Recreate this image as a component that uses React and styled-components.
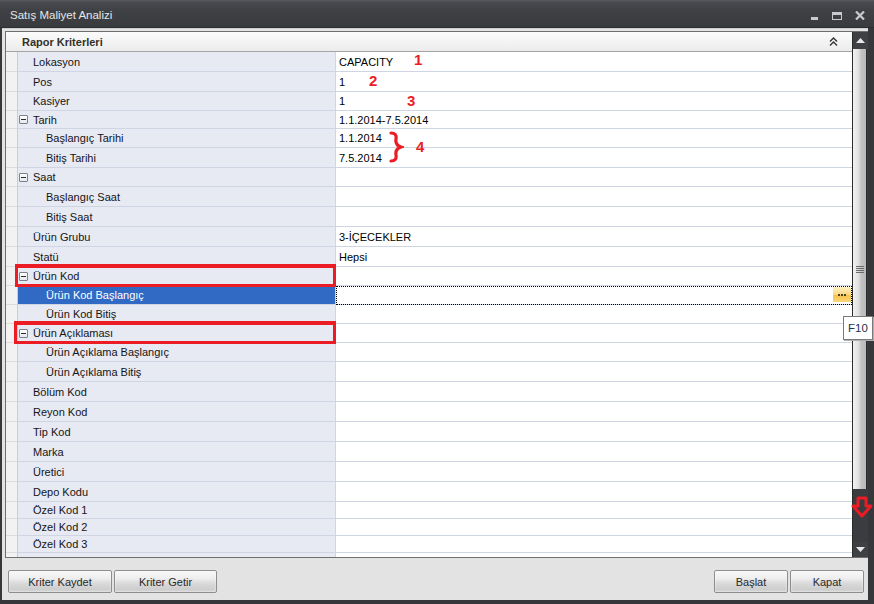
import React from "react";
import styled, { createGlobalStyle } from "styled-components";

const GlobalStyle = createGlobalStyle`
  html, body {
    margin: 0;
    padding: 0;
    background: #36373b;
  }
  body {
    font-family: "Liberation Sans", Arial, sans-serif;
    font-size: 11px;
  }
`;

const Window = styled.div`
  position: relative;
  width: 874px;
  height: 604px;
  display: flex;
  flex-direction: column;
  background: #36373b;
  overflow: hidden;
`;

const TitleBar = styled.div`
  height: 28px;
  flex: 0 0 28px;
  box-sizing: border-box;
  display: flex;
  align-items: center;
  padding: 0 10px;
  background: linear-gradient(#5a5b60 0, #4a4b50 2px, #404145 10px, #3a3b3f 100%);
  border-bottom: 1px solid #2c2d30;
`;

const Title = styled.div`
  flex: 1;
  color: #e4e6e8;
  font-size: 11.5px;
  padding-top: 2px;
`;

const Controls = styled.div`
  display: flex;
  align-items: center;
  gap: 13px;
  margin-right: -1px;
  padding-top: 4px;
`;

const Frame = styled.div`
  flex: 1;
  display: flex;
  padding: 0 6px 4px 2px;
  min-height: 0;
`;

const Body = styled.div`
  flex: 1;
  display: flex;
  flex-direction: column;
  background: #e3e3e3;
  padding: 2px 0 0 3px;
  border-top: 1px solid #cfcfcf;
`;

const GridArea = styled.div`
  height: 527px;
  display: flex;
  border: 1px solid #6f6f6f;
  border-right: none;
  box-sizing: border-box;
`;

const PropertyList = styled.div`
  flex: 1;
  display: flex;
  flex-direction: column;
  overflow: hidden;
  background: #fff;
`;

const CategoryHeader = styled.div`
  height: 20px;
  flex: 0 0 20px;
  box-sizing: border-box;
  display: flex;
  align-items: center;
  padding: 0 14px 0 16px;
  background: linear-gradient(#fbfbfb, #ececec);
  border-bottom: 1px solid #a4a4a4;
  font-weight: bold;
  color: #33302a;
`;

const HeaderText = styled.div`
  flex: 1;
`;

const Row = styled.div`
  display: grid;
  grid-template-columns: 12px 318px 1fr;
  height: ${(p) => p.$h}px;
  flex: 0 0 ${(p) => p.$h}px;
`;

const Gutter = styled.div`
  background: #f2f2f2;
  border-bottom: 1px solid #dcdcdc;
  border-right: 1px solid #c9ccd6;
`;

const Label = styled.div`
  display: flex;
  align-items: center;
  gap: 4px;
  padding-left: ${(p) => (p.$child ? 28 : p.$group ? 1 : 15)}px;
  background: ${(p) => (p.$selected ? "#316ac5" : "#e7e9f3")};
  color: ${(p) => (p.$selected ? "#fff" : "#151515")};
  border-bottom: 1px solid #cfd5e2;
  border-right: 1px solid #cfd5e2;
  white-space: nowrap;
  overflow: hidden;
`;

const Value = styled.div`
  position: relative;
  display: flex;
  align-items: center;
  padding-left: 3px;
  background: #fff;
  color: #000;
  border-bottom: 1px solid #cfd5e2;
  outline: ${(p) => (p.$focused ? "1px dotted #000" : "none")};
  outline-offset: -1px;
`;

const EllipsisButton = styled.div`
  position: absolute;
  right: 1px;
  top: 1px;
  bottom: 2px;
  width: 18px;
  display: flex;
  align-items: center;
  justify-content: center;
  gap: 1px;
  background: linear-gradient(#fff0c4, #fcd982 50%, #f7c24b 55%, #fbd77a);
  span {
    width: 2px;
    height: 2px;
    background: #4a3e22;
  }
`;

const ExpandBox = styled.span`
  position: relative;
  width: 7px;
  height: 7px;
  border: 1px solid #7b828e;
  border-radius: 1px;
  background: linear-gradient(#fff, #e6e8ee);
  margin-right: 1px;
  &::after {
    content: "";
    position: absolute;
    left: 1px;
    right: 1px;
    top: 3px;
    height: 1px;
    background: #2d2d2d;
  }
`;

const ScrollBar = styled.div`
  width: 16px;
  flex: 0 0 16px;
  display: flex;
  flex-direction: column;
  background: #3b3c3f;
  border-left: 1px solid #2a2a2a;
  box-sizing: border-box;
`;

const ScrollButton = styled.div`
  height: ${(p) => p.$h}px;
  flex: 0 0 ${(p) => p.$h}px;
  display: flex;
  align-items: center;
  justify-content: center;
  background: #3f4044;
`;

const Thumb = styled.div`
  height: 440px;
  flex: 0 0 440px;
  display: flex;
  align-items: center;
  justify-content: center;
  margin: 0 1px 0 0;
  background: linear-gradient(to right, #f3f3f3, #dedede 45%, #c4c4c4 60%, #b9b9b9);
  border-right: 1px solid #2a2a2a;
`;

const Grip = styled.div`
  width: 8px;
  display: flex;
  flex-direction: column;
  gap: 1px;
  span {
    height: 1px;
    background: #6b6b6b;
  }
`;

const Track = styled.div`
  flex: 1;
  background: #3b3c3f;
`;

const Footer = styled.div`
  flex: 1;
  display: flex;
  justify-content: space-between;
  padding: 12px 4px 0 3px;
`;

const ButtonGroup = styled.div`
  display: flex;
  gap: 2px;
  align-items: flex-start;
`;

const Button = styled.button`
  width: ${(p) => p.$w}px;
  height: 23px;
  box-sizing: border-box;
  border: 1px solid #8e8e8e;
  border-radius: 2px;
  background: linear-gradient(#f8f8f8 0%, #eeeeee 35%, #d9d9d9 60%, #cdcdcd 90%, #d8d8d8 100%);
  box-shadow: inset 0 0 2px rgba(255, 255, 255, 0.9);
  font-family: "Liberation Sans", Arial, sans-serif;
  font-size: 11px;
  color: #2a2a2a;
  padding: 0;
`;

const Tooltip = styled.div`
  position: absolute;
  left: 843px;
  top: 316px;
  width: 30px;
  height: 24px;
  box-sizing: border-box;
  background: #fff;
  border: 1px solid #7a7a7a;
  box-shadow: 1px 1px 0 #b0b0b0;
  color: #23324f;
  font-size: 11.5px;
  display: flex;
  align-items: center;
  justify-content: center;
`;

const Mark = styled.div`
  position: absolute;
  left: ${(p) => p.$x}px;
  top: ${(p) => p.$y}px;
  color: #ec1c24;
  font-weight: bold;
  font-size: 15px;
  line-height: 15px;
`;

const Highlight = styled.div`
  position: absolute;
  left: ${(p) => p.$x}px;
  top: ${(p) => p.$y}px;
  width: ${(p) => p.$w}px;
  height: ${(p) => p.$h}px;
  box-sizing: border-box;
  border: 3px solid #ec1c24;
  border-top-width: 4px;
`;

const Overlay = styled.svg`
  position: absolute;
  left: ${(p) => p.$x}px;
  top: ${(p) => p.$y}px;
`;

const rows = [
  { label: "Lokasyon", value: "CAPACITY", h: 20 },
  { label: "Pos", value: "1", h: 20 },
  { label: "Kasiyer", value: "1", h: 19 },
  { label: "Tarih", value: "1.1.2014-7.5.2014", h: 18, group: true },
  { label: "Başlangıç Tarihi", value: "1.1.2014", h: 19, child: true },
  { label: "Bitiş Tarihi", value: "7.5.2014", h: 20, child: true },
  { label: "Saat", h: 19, group: true },
  { label: "Başlangıç Saat", h: 20, child: true },
  { label: "Bitiş Saat", h: 20, child: true },
  { label: "Ürün Grubu", value: "3-İÇECEKLER", h: 20 },
  { label: "Statü", value: "Hepsi", h: 20 },
  { label: "Ürün Kod", h: 19, group: true },
  { label: "Ürün Kod Başlangıç", h: 19, child: true, selected: true },
  { label: "Ürün Kod Bitiş", h: 19, child: true },
  { label: "Ürün Açıklaması", h: 19, group: true },
  { label: "Ürün Açıklama Başlangıç", h: 19, child: true },
  { label: "Ürün Açıklama Bitiş", h: 20, child: true },
  { label: "Bölüm Kod", h: 20 },
  { label: "Reyon Kod", h: 20 },
  { label: "Tip Kod", h: 20 },
  { label: "Marka", h: 20 },
  { label: "Üretici", h: 20 },
  { label: "Depo Kodu", h: 20 },
  { label: "Özel Kod 1", h: 17 },
  { label: "Özel Kod 2", h: 17 },
  { label: "Özel Kod 3", h: 17 },
  { label: "", h: 12 },
];

const Minimize = () => (
  <svg width="8" height="8" viewBox="0 0 8 8">
    <rect x="0" y="5" width="7" height="3" fill="#c7cbd0" />
  </svg>
);

const Maximize = () => (
  <svg width="10" height="8" viewBox="0 0 10 8">
    <rect x="0.5" y="0.5" width="9" height="7" fill="none" stroke="#c7cbd0" />
    <rect x="0" y="0" width="10" height="3" fill="#c7cbd0" />
  </svg>
);

const Close = () => (
  <svg width="10" height="9" viewBox="0 0 10 9">
    <path d="M1 0.5 L9 8.5 M9 0.5 L1 8.5" stroke="#c7cbd0" strokeWidth="2.2" />
  </svg>
);

const DoubleUp = () => (
  <svg width="9" height="9" viewBox="0 0 9 9">
    <path d="M1 4.5 L4.5 1 L8 4.5 M1 8.5 L4.5 5 L8 8.5" stroke="#333" strokeWidth="1.4" fill="none" />
  </svg>
);

const Arrow = ({ down }) => (
  <svg width="9" height="5" viewBox="0 0 9 5">
    <path d={down ? "M0 0 L9 0 L4.5 5 Z" : "M0 5 L9 5 L4.5 0 Z"} fill="#e8e8e8" />
  </svg>
);

export default function App() {
  return (
    <>
      <GlobalStyle />
      <Window>
        <TitleBar>
          <Title>Satış Maliyet Analizi</Title>
          <Controls>
            <Minimize />
            <Maximize />
            <Close />
          </Controls>
        </TitleBar>
        <Frame>
          <Body>
            <GridArea>
              <PropertyList>
                <CategoryHeader>
                  <HeaderText>Rapor Kriterleri</HeaderText>
                  <DoubleUp />
                </CategoryHeader>
                {rows.map((r, i) => (
                  <Row key={i} $h={r.h}>
                    <Gutter />
                    <Label $child={r.child} $group={r.group} $selected={r.selected}>
                      {r.group && <ExpandBox />}
                      {r.label}
                    </Label>
                    <Value $focused={r.selected}>
                      {r.value}
                      {r.selected && (
                        <EllipsisButton>
                          <span />
                          <span />
                          <span />
                        </EllipsisButton>
                      )}
                    </Value>
                  </Row>
                ))}
              </PropertyList>
              <ScrollBar>
                <ScrollButton $h={17}>
                  <Arrow />
                </ScrollButton>
                <Thumb>
                  <Grip>
                    <span />
                    <span />
                    <span />
                    <span />
                  </Grip>
                </Thumb>
                <Track />
                <ScrollButton $h={15}>
                  <Arrow down />
                </ScrollButton>
              </ScrollBar>
            </GridArea>
            <Footer>
              <ButtonGroup>
                <Button $w={104}>Kriter Kaydet</Button>
                <Button $w={103}>Kriter Getir</Button>
              </ButtonGroup>
              <ButtonGroup>
                <Button $w={74}>Başlat</Button>
                <Button $w={74}>Kapat</Button>
              </ButtonGroup>
            </Footer>
          </Body>
        </Frame>

        <Mark $x={414} $y={52}>1</Mark>
        <Mark $x={369} $y={73}>2</Mark>
        <Mark $x={407} $y={93}>3</Mark>
        <Mark $x={416} $y={139}>4</Mark>
        <Overlay $x={388} $y={131} width="16" height="32" viewBox="0 0 16 32">
          <path
            d="M3 2 Q9 2 8 8 Q7 14 13 16 Q7 18 8 24 Q9 30 3 30"
            stroke="#ec1c24"
            strokeWidth="3.2"
            fill="none"
            strokeLinecap="round"
          />
        </Overlay>
        <Highlight $x={15} $y={264} $w={321} $h={23} />
        <Highlight $x={14} $y={321} $w={322} $h={23} />
        <Overlay $x={851} $y={496} width="22" height="22" viewBox="0 0 22 22">
          <path
            d="M7 2 L15 2 L15 10 L20 10 L11 20 L2 10 L7 10 Z"
            stroke="#ec1c24"
            strokeWidth="3"
            fill="none"
            strokeLinejoin="round"
          />
        </Overlay>
        <Tooltip>F10</Tooltip>
      </Window>
    </>
  );
}
